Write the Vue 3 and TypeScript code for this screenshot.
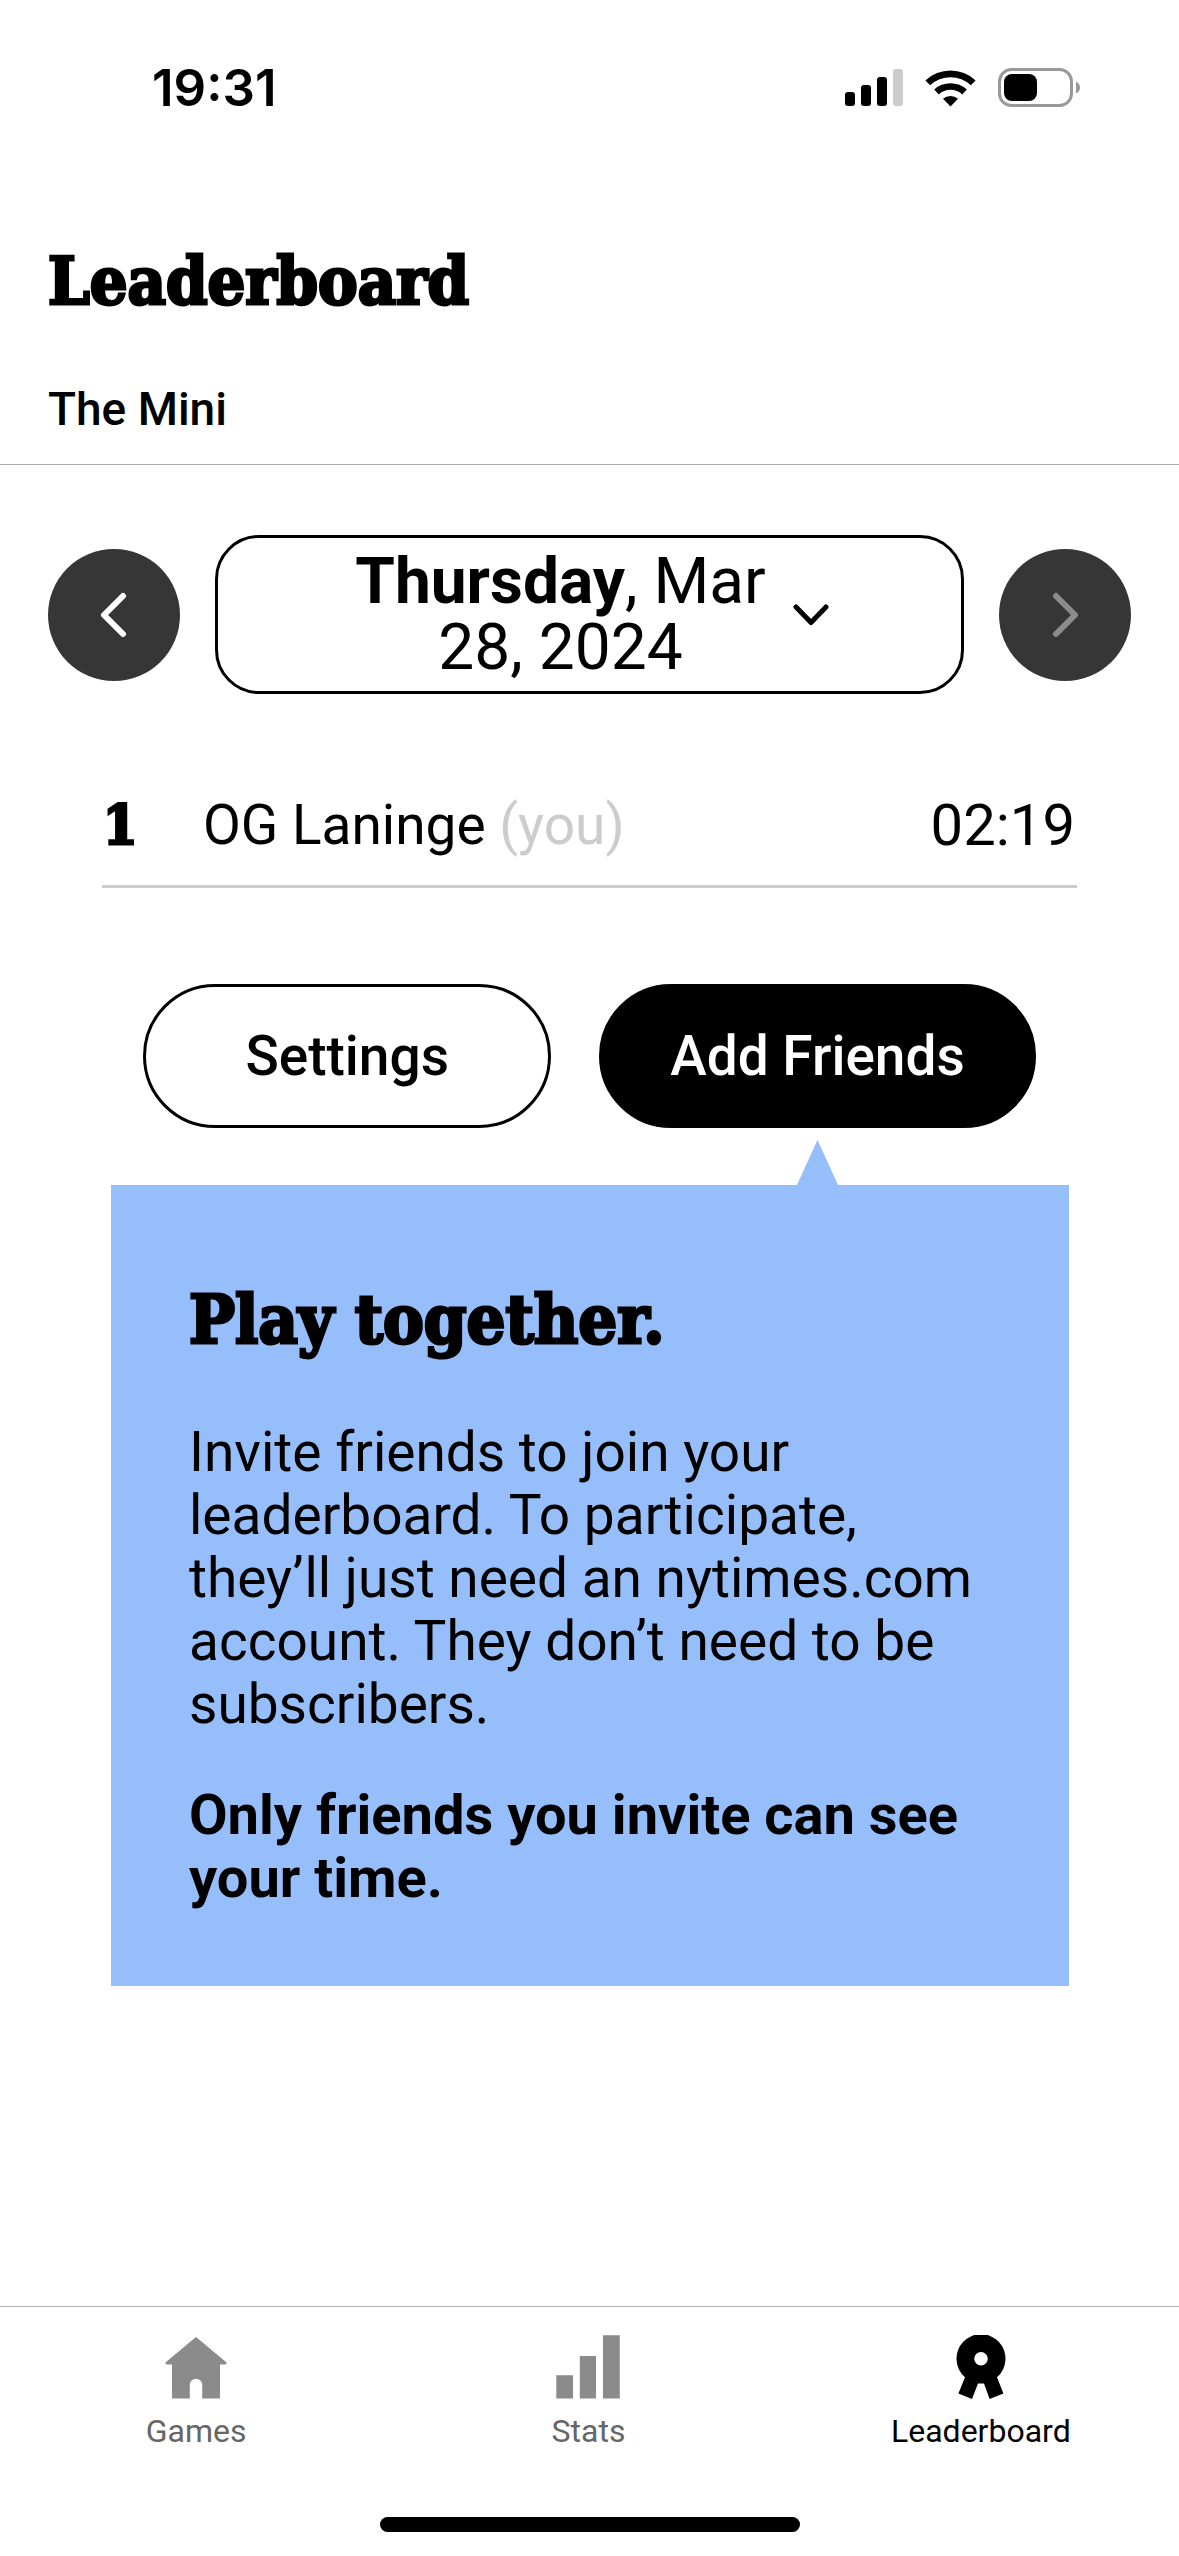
<script setup lang="ts">
import { ref } from 'vue'

interface Entry {
  rank: number
  name: string
  you: boolean
  time: string
}

const entries = ref<Entry[]>([{ rank: 1, name: 'OG Laninge', you: true, time: '02:19' }])
</script>

<template>
  <div class="page">
    <div class="status">
      <span class="clock">19:31</span>
      <div class="status-icons">
        <svg width="58" height="38" viewBox="0 0 58 38" aria-hidden="true">
          <rect x="0" y="23" width="10" height="14" rx="3" />
          <rect x="16" y="16" width="10" height="21" rx="3" />
          <rect x="32" y="8" width="10" height="29" rx="3" />
          <rect x="48" y="0" width="10" height="37" rx="3" fill="#ccc" />
        </svg>
        <svg width="51" height="38" viewBox="0 0 51 38" aria-hidden="true">
          <path d="M25.5 37.5 18 29.8a11.2 11.2 0 0 1 15 0Z" />
          <path d="M9.2 20.6a24 24 0 0 1 32.6 0l-4.6 4.8a17.2 17.2 0 0 0-23.4 0Z" />
          <path d="M.4 11.4a36.6 36.6 0 0 1 50.2 0l-4.8 4.9a29.6 29.6 0 0 0-40.6 0Z" />
        </svg>
        <svg width="83" height="40" viewBox="0 0 83 40" aria-hidden="true">
          <rect x="1.5" y="1.5" width="72" height="36" rx="12" fill="none" stroke="#999" stroke-width="3" />
          <rect x="6" y="6" width="33" height="27" rx="8" />
          <path d="M78 13.5q4 2 4 6t-4 6Z" fill="#999" />
        </svg>
      </div>
    </div>

    <header class="header">
      <h1 class="title">Leaderboard</h1>
      <h2 class="subtitle">The Mini</h2>
    </header>

    <main class="main">
      <div class="date-nav">
        <button class="round" type="button" aria-label="Previous day">
          <svg width="30" height="46" viewBox="0 0 30 46" aria-hidden="true">
            <path d="M24 4 5 23l19 19" />
          </svg>
        </button>
        <button class="date" type="button">
          <span class="date-text"><strong>Thursday</strong><span>, Mar </span><span class="day">28, 2024</span></span>
          <svg width="36" height="22" viewBox="0 0 36 22" aria-hidden="true">
            <path d="M3 3 18 18.500 33 3" />
          </svg>
        </button>
        <button class="round round-off" type="button" aria-label="Next day" disabled>
          <svg width="30" height="46" viewBox="0 0 30 46" aria-hidden="true">
            <path d="m6 4 19 19L6 42" />
          </svg>
        </button>
      </div>

      <table class="board">
        <tbody>
          <tr v-for="entry in entries" :key="entry.rank">
            <td class="rank">{{ entry.rank }}</td>
            <td class="name">{{ entry.name }} <span v-if="entry.you" class="you">(you)</span></td>
            <td class="time">{{ entry.time }}</td>
          </tr>
        </tbody>
      </table>

      <div class="actions">
        <button class="pill" type="button">Settings</button>
        <button class="pill pill-dark" type="button">Add Friends</button>
      </div>

      <section class="card">
        <h3 class="card-title">Play together.</h3>
        <p>Invite friends to join your leaderboard. To participate, they’ll just need an nytimes.com account. They don’t need to be subscribers.</p>
        <p class="strong">Only friends you invite can see your time.</p>
      </section>
    </main>

    <footer class="footer">
      <nav class="tabs">
        <a class="tab" href="#games">
          <svg width="64" height="64" viewBox="0 0 64 64" aria-hidden="true">
            <path d="M32 2 62 27q1.500 2.500-1 2.500H56V63.600H38.200V50a6.200 6.200 0 0 0-12.400 0V63.600H8V29.500H3q-2.500 0-1-2.500Z" />
          </svg>
          <span>Games</span>
        </a>
        <a class="tab" href="#stats">
          <svg width="64" height="64" viewBox="0 0 64 64" aria-hidden="true">
            <path d="M.3 40.300H17V63.600H.3ZM23.800 21H40V63.600H23.800ZM47 .3H63.800V63.600H47Z" />
          </svg>
          <span>Stats</span>
        </a>
        <a class="tab tab-on" href="#leaderboard" aria-current="page">
          <svg width="64" height="64" viewBox="-32 0 64 64" aria-hidden="true">
            <path fill-rule="evenodd" d="M16 42.200 22.400 58.600 8.600 64 3 48.500H-3L-9 64-22.600 58.600-16 42.200A24.500 24.500 0 1 1 16 42.200ZM0 16.900a6.800 6.800 0 1 0 0 13.600 6.800 6.800 0 0 0 0-13.600Z" />
          </svg>
          <span>Leaderboard</span>
        </a>
      </nav>
      <div class="home-bar"></div>
    </footer>
  </div>
</template>

<style>
body {
  margin: 0;
  background: #fff;
}
</style>

<style scoped>
.page {
  display: flex;
  flex-direction: column;
  min-height: 100vh;
  color: #000;
  font-family: Roboto, "Liberation Sans", sans-serif;
}
svg {
  display: block;
  flex: none;
}
h1,
h2,
h3,
p {
  margin: 0;
}
button {
  padding: 0;
  color: inherit;
  font-family: inherit;
}
.status {
  display: flex;
  align-items: center;
  justify-content: space-between;
  height: 175px;
  padding: 0 98px 0 152px;
}
.clock {
  font: 600 51px/60px Inter, sans-serif;
}
.status-icons {
  display: flex;
  align-items: center;
  gap: 22px;
}
.header {
  padding: 66px 48px 27px;
  border-bottom: 1px solid #ababab;
}
.title,
.card-title,
.rank {
  font-family: "DejaVu Serif Condensed", "DejaVu Serif", serif;
  font-stretch: condensed;
  font-weight: 700;
  -webkit-text-stroke: 3px #000;
}
.title {
  font-size: 66px;
  line-height: 80px;
}
.subtitle {
  margin-top: 60px;
  font-size: 46px;
  font-weight: 500;
  line-height: 56px;
}
.main {
  padding: 70px 48px 0;
}
.date-nav {
  display: flex;
  align-items: center;
  gap: 35px;
}
.round {
  display: flex;
  flex: none;
  align-items: center;
  justify-content: center;
  width: 132px;
  height: 132px;
  border: 0;
  border-radius: 50%;
  background: #363636;
}
.round path,
.date path {
  fill: none;
  stroke: #fff;
  stroke-width: 6;
  stroke-linecap: round;
  stroke-linejoin: round;
}
.round-off path {
  stroke: #8b8b8b;
}
.date {
  display: flex;
  flex: 1;
  align-items: center;
  justify-content: center;
  gap: 22px;
  height: 159px;
  border: 3px solid #000;
  border-radius: 44px;
  background: #fff;
}
.date path {
  stroke: #000;
  stroke-width: 5;
}
.date-text {
  max-width: 420px;
  font-size: 64px;
  line-height: 66px;
  text-align: center;
}
.day {
  white-space: nowrap;
}
.board {
  width: calc(100% - 108px);
  margin: 99px 54px 0;
  border-collapse: collapse;
  font-size: 55px;
  line-height: 64px;
}
.board td {
  padding: 0 0 28px;
  border-bottom: 3px solid #ccc;
}
.board .rank {
  width: 100px;
  padding-left: 1px;
}
.you {
  color: #ccc;
}
.board .time {
  padding-right: 2px;
  font-size: 58px;
  text-align: right;
}
.actions {
  display: flex;
  justify-content: center;
  gap: 48px;
  margin-top: 96px;
}
.pill {
  position: relative;
  min-width: 408px;
  height: 144px;
  padding: 0 68px;
  border: 3px solid #000;
  border-radius: 72px;
  background: #fff;
  font-size: 55px;
  font-weight: 500;
}
.pill-dark {
  background: #000;
  color: #fff;
}
/* Pointer of the card below, centred under the button */
.pill-dark::after {
  content: "";
  position: absolute;
  top: 153px;
  left: calc(50% - 21px);
  width: 42px;
  height: 46px;
  background: #96befb;
  clip-path: polygon(50% 0, 100% 100%, 0 100%);
}
.card {
  margin: 57px 62px 0 63px;
  padding: 94px 78px 76px;
  background: #96befb;
  font-size: 55px;
  line-height: 63px;
}
.card-title {
  font-size: 68px;
  line-height: 80px;
}
.card p {
  margin-top: 62px;
}
.card .strong {
  margin-top: 48px;
  font-size: 56px;
  font-weight: 700;
}
.footer {
  margin-top: auto;
  padding-bottom: 24px;
  border-top: 1px solid #b3b3b3;
}
.tabs {
  display: grid;
  grid-template-columns: repeat(3, 1fr);
  padding: 28px 2px 0 0;
}
.tab {
  display: flex;
  flex-direction: column;
  align-items: center;
  gap: 12px;
  color: #666;
  font-size: 32px;
  line-height: 40px;
  text-decoration: none;
}
.tab svg {
  fill: #8b8b8b;
}
.tab-on {
  color: #000;
}
.tab-on svg {
  fill: #000;
}
.home-bar {
  width: 420px;
  height: 15px;
  margin: 66px auto 0;
  border-radius: 8px;
  background: #000;
}
</style>
